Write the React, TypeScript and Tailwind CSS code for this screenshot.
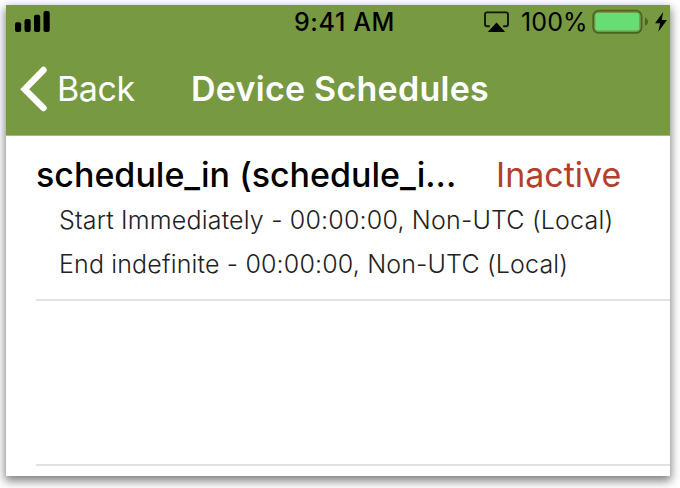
function Signal() {
  return (
    <svg width="36" height="23" viewBox="0 0 36 23" className="shrink-0">
      <rect x="0" y="11.2" width="6.2" height="9.8" rx="2" />
      <rect x="9.5" y="8" width="6.2" height="13" rx="2" />
      <rect x="19" y="3.7" width="6.2" height="17.3" rx="2" />
      <rect x="28.5" y="0" width="6.2" height="21" rx="2" />
    </svg>
  );
}

function AirPlay() {
  return (
    <svg width="26" height="22" viewBox="0 0 26 22" className="shrink-0">
      <path d="M5.8 15.3H3Q1 15.3 1 13.3V3.4Q1 1.4 3 1.4H22Q24 1.4 24 3.4V13.3Q24 15.3 22 15.3H19.2" fill="none" stroke="#111607" strokeWidth="1.9" />
      <path d="M12.5 11.4 21.2 20.9H3.8Z" />
    </svg>
  );
}

function Battery() {
  return (
    <svg width="58" height="26" viewBox="0 0 58 26" className="shrink-0">
      <rect x="1.2" y="1.7" width="48.4" height="22.2" rx="5.5" fill="none" stroke="#4a6423" strokeWidth="1.7" />
      <rect x="3.4" y="4" width="43.8" height="17.6" rx="2.4" fill="#68dd75" />
      <path d="M53 8.8Q56 10 56 12.8T53 16.8Z" fill="#4a6423" />
    </svg>
  );
}

export default function App() {
  return (
    <div className="h-[488px] w-[680px] overflow-hidden bg-white pl-[6px] pt-[5px] font-['Inter',sans-serif]">
      <main className="h-[471px] w-[664px] bg-white shadow-[0_4px_9px_1px_rgba(0,0,0,0.5)]">
        <header className="h-[131px] border-b border-[#a3b984] bg-[#779942]">
          <div className="flex h-[34px] items-center whitespace-nowrap text-black">
            <div className="w-[281px] pl-[9px]"><Signal /></div>
            <div className="w-[197px] pl-[7px] pt-px text-[25px] font-medium tracking-[0.6px]">9:41 AM</div>
            <AirPlay />
            <div className="ml-[11px] w-[71px] pt-px text-[25px] tracking-[0.1px]">100%</div>
            <Battery />
            <svg width="12" height="20" viewBox="0 0 12 20" className="-mt-px ml-[5px] -mr-[6px] shrink-0">
              <path d="M8.2 0 0 11.3H5.1L3.3 19.8 12 8H6.7Z" />
            </svg>
          </div>
          <div className="flex h-[96px] items-center whitespace-nowrap pt-[3px] text-[34px] text-white">
            <svg width="28" height="46" viewBox="0 0 28 46" className="ml-[14px] shrink-0">
              <path d="M23.5 4 4.7 23.2 23.5 42.1" fill="none" stroke="white" strokeWidth="6.4" strokeLinecap="round" />
            </svg>
            <div className="ml-[9px] w-[134px] tracking-[-0.4px]">Back</div>
            <h1 className="font-semibold tracking-[0.25px]">Device Schedules</h1>
          </div>
        </header>
        <section className="ml-[30px] h-[165px] border-b-2 border-[#e2e2e2] pt-[18px]">
          <div className="flex h-[41px] items-center whitespace-nowrap text-[34px]">
            <div className="w-[460px] font-medium text-black">schedule_in (schedule_i...</div>
            <div className="text-[#b43e2c]">Inactive</div>
          </div>
          <div className="mt-[4px] flex h-[44px] items-center whitespace-nowrap pl-[23px] text-[25px] font-light tracking-[0.18px] text-[#222]">Start Immediately - 00:00:00, Non-UTC (Local)</div>
          <div className="flex h-[44px] items-center whitespace-nowrap pl-[23px] text-[25px] font-light tracking-[0.15px] text-[#222]">End indefinite - 00:00:00, Non-UTC (Local)</div>
        </section>
        <div className="ml-[30px] h-[165px] border-b-2 border-[#e2e2e2]" />
      </main>
    </div>
  );
}
